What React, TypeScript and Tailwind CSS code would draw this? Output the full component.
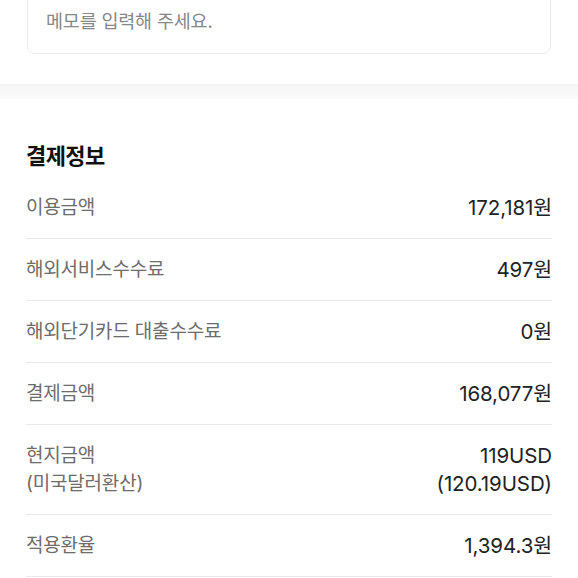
const rows: { label: string[]; value: string[] }[] = [
  { label: ["이용금액"], value: ["172,181원"] },
  { label: ["해외서비스수수료"], value: ["497원"] },
  { label: ["해외단기카드 대출수수료"], value: ["0원"] },
  { label: ["결제금액"], value: ["168,077원"] },
  { label: ["현지금액", "(미국달러환산)"], value: ["119USD", "(120.19USD)"] },
  { label: ["적용환율"], value: ["1,394.3원"] },
];

const App = () => {
  return (
    <div
      className="w-[578px] h-[578px] overflow-hidden bg-white"
      style={{ fontFamily: '"Inter", "Noto Sans CJK KR", sans-serif' }}
    >
      {/* memo input */}
      <div className="px-[27px]">
        <div className="-mt-[20px] rounded-[8px] border border-[#ececec] px-[18px] pt-[28px] pb-[20px]">
          <p className="text-[18.5px] leading-[24px] tracking-[-0.2px] text-[#878787]">
            메모를 입력해 주세요.
          </p>
        </div>
      </div>

      <div className="mt-[30px] h-[15px] bg-gradient-to-b from-[#f4f4f4] to-[#fbfbfb]" />

      {/* payment info */}
      <section className="px-[26px] pt-[43px]">
        <h2 className="text-[22px] leading-[28px] font-bold tracking-[-0.6px] text-[#111]">
          결제정보
        </h2>
        <ul className="mt-[7px]">
          {rows.map((row, i) => (
            <li
              key={i}
              className="flex justify-between border-b border-[#e9e9e9] pt-[17px] pb-[16px] text-[19px] leading-[28px]"
            >
              <div className="tracking-[-0.2px] text-[#6c6c6c]">
                {row.label.map((t) => (
                  <p key={t}>{t}</p>
                ))}
              </div>
              <div className="text-right text-[20.5px] tracking-[-0.1px] text-[#222]">
                {row.value.map((t) => (
                  <p key={t}>{t}</p>
                ))}
              </div>
            </li>
          ))}
        </ul>
      </section>
    </div>
  );
};

export default App;
